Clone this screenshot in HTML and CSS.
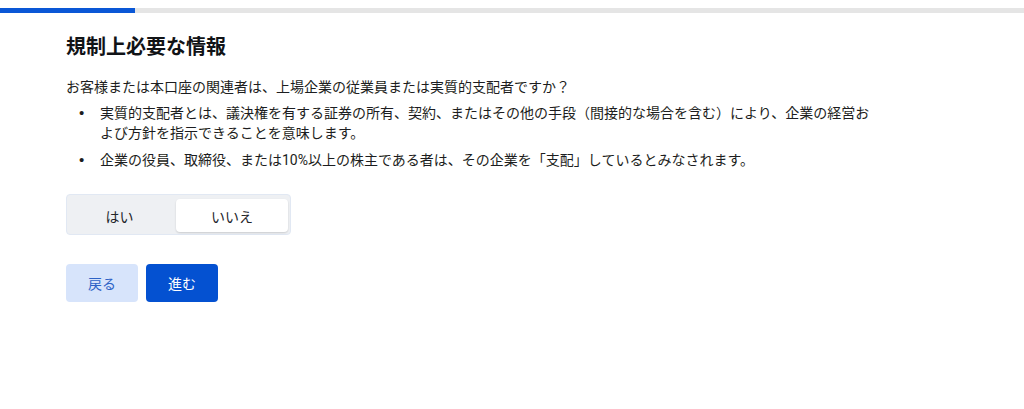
FILE: index.html
```html
<!DOCTYPE html>
<html lang="ja">
<head>
    <meta charset="UTF-8">
    <meta name="viewport" content="width=device-width, initial-scale=1.0">
    <title>規制上必要な情報</title>
    <link rel="stylesheet" href="styles.css">
</head>
<body>

    <div class="progress">
        <div class="progress-fill" style="width: 13.2%"></div>
    </div>

    <main class="page">
        <h1>規制上必要な情報</h1>
        <p class="question">お客様または本口座の関連者は、上場企業の従業員または実質的支配者ですか？</p>
        <ul class="notes">
            <li>実質的支配者とは、議決権を有する証券の所有、契約、またはその他の手段（間接的な場合を含む）により、企業の経営および方針を指示できることを意味します。</li>
            <li>企業の役員、取締役、または10%以上の株主である者は、その企業を「支配」しているとみなされます。</li>
        </ul>

        <div class="toggle">
            <button class="toggle-option">はい</button>
            <button class="toggle-option selected">いいえ</button>
        </div>

        <div class="actions">
            <button class="btn btn-back">戻る</button>
            <button class="btn btn-next">進む</button>
        </div>
    </main>

</body>
</html>
```

FILE: styles.css
```css
* {
    margin: 0;
    padding: 0;
    box-sizing: border-box;
}

body {
    font-family: Roboto, "Noto Sans CJK JP", sans-serif;
    color: #1c1d20;
    background: #ffffff;
}

.progress {
    margin-top: 8px;
    height: 5px;
    background: #e5e5e5;
}

.progress-fill {
    height: 100%;
    background: #0a57d6;
}

.page {
    padding: 20px 0 0 66px;
    width: 876px;
}

.page h1 {
    font-size: 20px;
    font-weight: 700;
    line-height: 28px;
    color: #111316;
}

.question {
    margin-top: 16px;
    font-size: 14px;
    line-height: 20px;
}

.notes {
    margin-top: 6px;
    padding-left: 34px;
    list-style: none;
    font-size: 14px;
    line-height: 20px;
}

.notes li {
    margin-bottom: 7px;
}

/* bullet sits in the gutter, a fixed distance from the text */
.notes li::before {
    content: "\2022";
    display: inline-block;
    width: 21px;
    margin-left: -21px;
    font-family: "Liberation Sans", Arial, sans-serif;
    font-size: 15px;
}

.toggle {
    display: flex;
    gap: 4px;
    width: max-content;
    margin-top: 24px;
    padding: 4px 2px 2px 0;
    background: #eef0f3;
    border: 1px solid #e1e8f3;
    border-radius: 4px;
}

.toggle-option {
    width: 105px;
    height: 33px;
    border: none;
    background: transparent;
    font-family: inherit;
    font-size: 14px;
    color: #23252a;
    border-radius: 4px;
    cursor: pointer;
}

.toggle-option.selected {
    width: 112px;
    background: #ffffff;
    box-shadow: 0 1px 2px rgba(0, 0, 0, 0.15);
}

.actions {
    display: flex;
    gap: 8px;
    margin-top: 29px;
}

.btn {
    width: 72px;
    height: 38px;
    border: none;
    border-radius: 4px;
    font-family: inherit;
    font-size: 14px;
    cursor: pointer;
}

.btn-back {
    background: #d7e4fb;
    color: #2e63c6;
}

.btn-next {
    background: #0451d1;
    color: #ffffff;
}
```
